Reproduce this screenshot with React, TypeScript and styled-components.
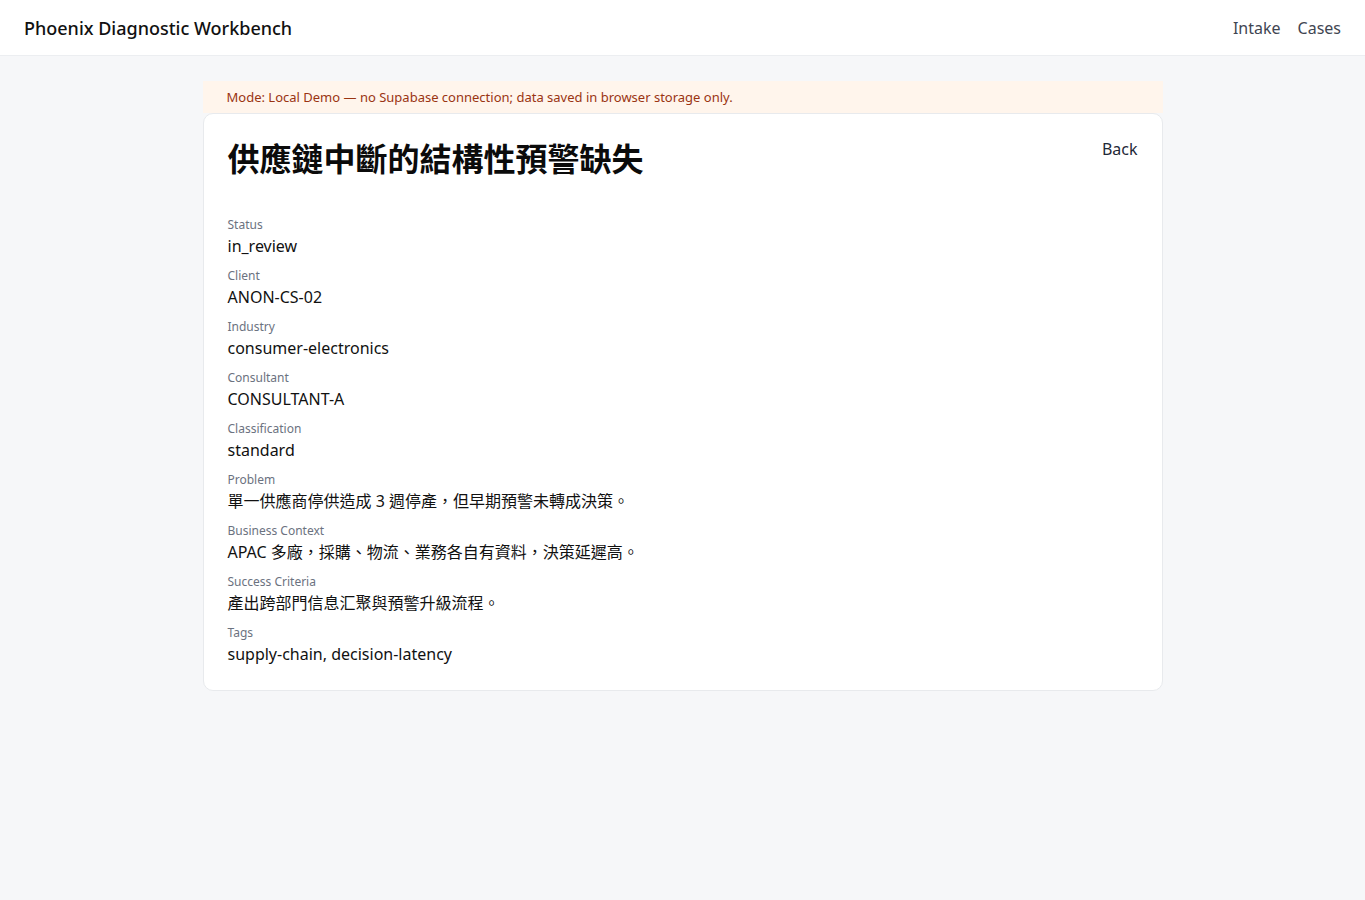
import styled, { createGlobalStyle } from 'styled-components';

const fields = [
  { label: 'Status', value: 'in_review' },
  { label: 'Client', value: 'ANON-CS-02' },
  { label: 'Industry', value: 'consumer-electronics' },
  { label: 'Consultant', value: 'CONSULTANT-A' },
  { label: 'Classification', value: 'standard' },
  { label: 'Problem', value: '單一供應商停供造成 3 週停產，但早期預警未轉成決策。' },
  { label: 'Business Context', value: 'APAC 多廠，採購、物流、業務各自有資料，決策延遲高。' },
  { label: 'Success Criteria', value: '產出跨部門信息汇聚與預警升級流程。' },
  { label: 'Tags', value: 'supply-chain, decision-latency' },
];

export default function App() {
  return (
    <>
      <GlobalStyle />
      <Header>
        <Brand>Phoenix Diagnostic Workbench</Brand>
        <Nav>
          <NavLink href="#">Intake</NavLink>
          <NavLink href="#">Cases</NavLink>
        </Nav>
      </Header>

      <Main>
        <Banner>Mode: Local Demo — no Supabase connection; data saved in browser storage only.</Banner>
        <Card>
          <CardHead>
            <Title>供應鏈中斷的結構性預警缺失</Title>
            <BackLink href="#">Back</BackLink>
          </CardHead>
          <FieldList>
            {fields.map((f) => (
              <Field key={f.label}>
                <Label>{f.label}</Label>
                <Value>{f.value}</Value>
              </Field>
            ))}
          </FieldList>
        </Card>
      </Main>
    </>
  );
}

const GlobalStyle = createGlobalStyle`
  html, body {
    margin: 0;
    padding: 0;
    background: #f6f7f9;
    font-family: "Noto Sans", "Noto Sans CJK TC", sans-serif;
    color: #111827;
  }
  * {
    box-sizing: border-box;
  }
`;

const Header = styled.header`
  height: 56px;
  background: #ffffff;
  border-bottom: 1px solid #eceef1;
  display: flex;
  align-items: center;
  justify-content: space-between;
  padding: 0 24px;
`;

const Brand = styled.div`
  font-size: 18px;
  font-weight: 500;
  color: #111111;
`;

const Nav = styled.nav`
  display: flex;
  gap: 17px;
`;

const NavLink = styled.a`
  font-size: 16px;
  color: #3f4652;
  text-decoration: none;
`;

const Main = styled.main`
  width: 960px;
  margin: 25px auto 0;
`;

const Banner = styled.div`
  height: 32px;
  display: flex;
  align-items: center;
  padding: 0 24px;
  background: #fff5ec;
  color: #9a3412;
  font-size: 13px;
`;

const Card = styled.section`
  background: #ffffff;
  border: 1px solid #e8eaed;
  border-radius: 10px;
  padding: 24px 24px 24px;
`;

const CardHead = styled.div`
  display: flex;
  justify-content: space-between;
  align-items: flex-start;
`;

const Title = styled.h1`
  margin: 0;
  font-size: 32px;
  line-height: 42px;
  font-weight: 700;
  color: #0b0b0b;
`;

const BackLink = styled.a`
  font-size: 16px;
  line-height: 22px;
  color: #1f2937;
  text-decoration: none;
`;

const FieldList = styled.div`
  margin-top: 36px;
  display: flex;
  flex-direction: column;
  gap: 9px;
`;

const Field = styled.div`
  display: flex;
  flex-direction: column;
`;

const Label = styled.div`
  font-size: 12px;
  line-height: 18px;
  color: #6b7280;
`;

const Value = styled.div`
  font-size: 16px;
  line-height: 24px;
  color: #111111;
`;
